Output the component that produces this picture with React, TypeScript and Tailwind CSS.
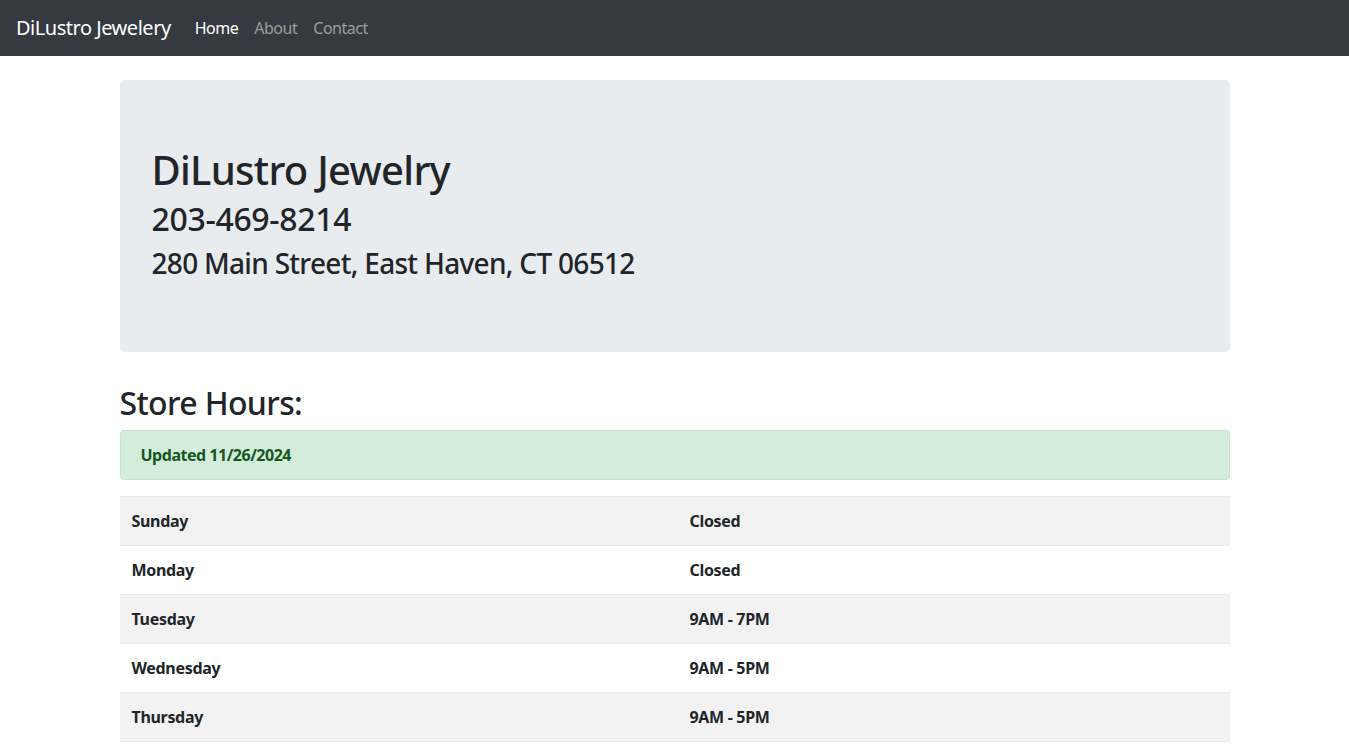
const hours = [
  { day: 'Sunday', time: 'Closed' },
  { day: 'Monday', time: 'Closed' },
  { day: 'Tuesday', time: '9AM - 7PM' },
  { day: 'Wednesday', time: '9AM - 5PM' },
  { day: 'Thursday', time: '9AM - 5PM' },
  { day: 'Friday', time: '9AM - 7PM' },
  { day: 'Saturday', time: '9AM - 4PM' },
]

export default function App() {
  return (
    <div className="min-h-screen bg-white text-[#212529] font-['Noto_Sans',sans-serif] text-base leading-6 tracking-[-0.03em]">
      <nav className="h-14 bg-[#343a40] flex items-center px-4">
        <a className="text-white text-xl mr-4 leading-[30px]">DiLustro Jewelery</a>
        <div className="flex">
          <a className="px-2 text-white">Home</a>
          <a className="px-2 text-white/50">About</a>
          <a className="px-2 text-white/50">Contact</a>
        </div>
      </nav>

      <div className="w-[1110px] mx-auto">
        <div className="mt-6 mb-8 bg-[#e9ecef] rounded-[5px] py-16 px-8">
          <h1 className="text-[40px] leading-[48px] font-medium mb-[6px] tracking-[-0.018em] pt-[2px]">DiLustro Jewelry</h1>
          <h2 className="text-[32px] leading-[38px] font-medium mb-2 tracking-[-0.01em]">203-469-8214</h2>
          <h3 className="text-[28px] leading-[34px] font-medium mb-2 tracking-[-0.025em]">280 Main Street, East Haven, CT 06512</h3>
        </div>

        <h2 className="text-[32px] leading-[38px] font-medium mb-2 tracking-[-0.02em]">Store Hours:</h2>
        <div className="bg-[#d4edda] border border-[#c3e6cb] text-[#155724] rounded-[4px] px-5 py-3 mb-4 font-bold">
          Updated 11/26/2024
        </div>

        <div className="mb-4">
          {hours.map((h, i) => (
            <div
              key={h.day}
              className={`flex border-t border-[#e9ecef] font-bold tracking-[-0.02em] ${i % 2 === 0 ? 'bg-[#f2f2f2]' : 'bg-white'}`}
            >
              <div className="w-[558px] p-3">{h.day}</div>
              <div className="flex-1 p-3">{h.time}</div>
            </div>
          ))}
        </div>
      </div>
    </div>
  )
}
